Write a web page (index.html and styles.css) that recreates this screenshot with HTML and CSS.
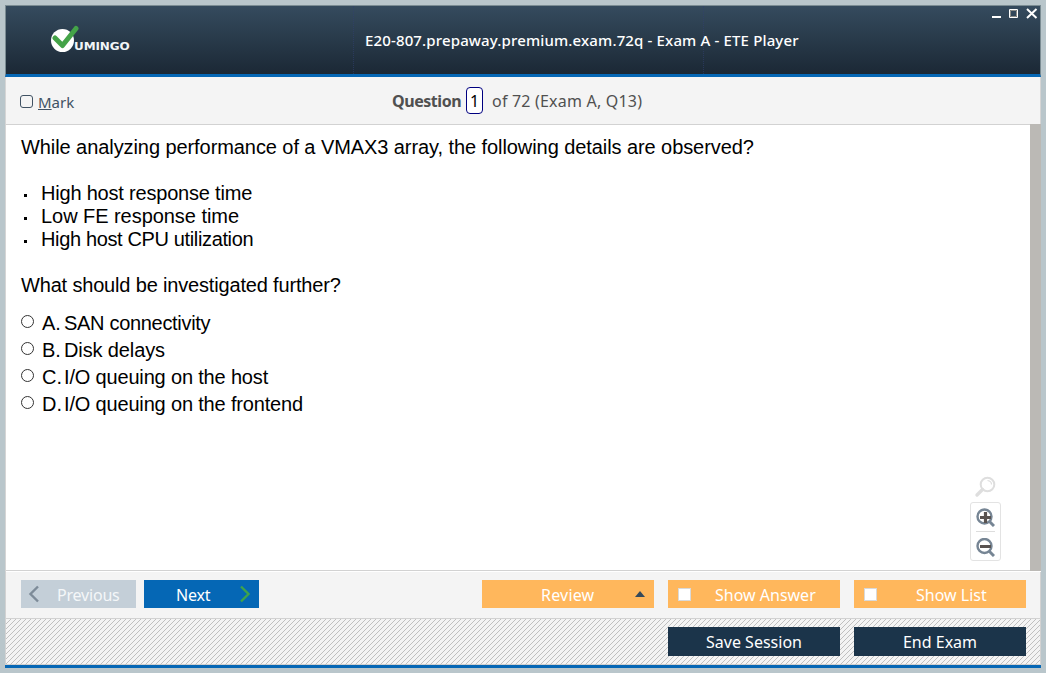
FILE: index.html
```html
<!DOCTYPE html>
<html lang="en">
<head>
<meta charset="utf-8">
<title>ETE Player</title>
<link rel="stylesheet" href="styles.css">
</head>
<body>
<main class="window">
  <header class="titlebar">
    <div class="brand">
      <svg class="logo-mark" width="29" height="28" viewBox="0 0 29 28"><circle cx="12.500" cy="15.500" r="11.500" fill="#fff"/><path d="M5 13L12.500 20.500L26 3.500" fill="none" stroke="#44a348" stroke-width="5" stroke-linecap="round" stroke-linejoin="round"/></svg>
      <span class="brand-name">UMINGO</span>
    </div>
    <h1 class="title">E20-807.prepaway.premium.exam.72q - Exam A - ETE Player</h1>
    <svg class="controls" width="46" height="11" viewBox="0 0 46 11"><path d="M0 8h9v2H0z" fill="#fff"/><path d="M17.500 1.500h8v8h-8z" fill="none" stroke="#fff"/><path d="M18.500 2.500h6v6h-6z" fill="none" stroke="#8d8d88"/><path d="M35 1L44.500 10M44.500 1L35 10" stroke="#fff" stroke-width="2"/></svg>
  </header>
  <section class="toolbar">
    <label class="mark"><span class="check"></span><span class="mark-text"><u>M</u>ark</span></label>
    <div class="counter"><b class="q-label">Question</b><span class="q-number">1</span><span class="q-total">of 72 (Exam A, Q13)</span></div>
  </section>
  <section class="body">
    <article class="question">
      <p class="line l-intro">While analyzing performance of a VMAX3 array, the following details are observed?</p>
      <ul class="details">
        <li class="line l-1">High host response time</li>
        <li class="line l-2">Low FE response time</li>
        <li class="line l-3">High host CPU utilization</li>
      </ul>
      <p class="line l-ask">What should be investigated further?</p>
      <div class="answers">
        <label class="answer"><i class="radio"></i><span class="letter">A.</span><span class="a-1">SAN connectivity</span></label>
        <label class="answer"><i class="radio"></i><span class="letter">B.</span><span class="a-2">Disk delays</span></label>
        <label class="answer"><i class="radio"></i><span class="letter">C.</span><span class="a-3">I/O queuing on the host</span></label>
        <label class="answer"><i class="radio"></i><span class="letter">D.</span><span class="a-3">I/O queuing on the frontend</span></label>
      </div>
    </article>
    <div class="zoom">
      <svg class="zoom-reset" width="22" height="22" viewBox="0 0 22 22" fill="none" stroke="#dedede"><circle cx="13.500" cy="8.500" r="6.800" stroke-width="2"/><path d="M8.500 13.500L3 19" stroke-width="3.400" stroke-linecap="round"/><path d="M13.500 4.500Q17.500 5 17.500 8.500" stroke-width="1.200"/></svg>
      <div class="zoom-box">
        <svg width="19" height="19" viewBox="0 0 19 19" fill="none"><circle cx="8.500" cy="8.500" r="7" stroke="#768594" stroke-width="2.400"/><path d="M13 13L18 18" stroke="#768594" stroke-width="3"/><path d="M4 9.500H15M9.500 4V15" stroke="#595350" stroke-width="3.200"/></svg>
        <hr class="zoom-rule">
        <svg width="19" height="19" viewBox="0 0 19 19" fill="none"><circle cx="8.500" cy="8" r="7" stroke="#768594" stroke-width="2.400"/><path d="M13 13L18 18" stroke="#768594" stroke-width="3"/><path d="M4 8.500H15" stroke="#595350" stroke-width="3"/></svg>
      </div>
    </div>
    <div class="scrollbar"></div>
  </section>
  <nav class="nav">
    <button class="btn prev"><svg width="12" height="18" viewBox="0 0 12 18"><path d="M10 1.500L2.500 9L10 16.500" fill="none" stroke="#7d8b98" stroke-width="2.400"/></svg><span class="t-prev">Previous</span></button>
    <button class="btn next"><span class="t-next">Next</span><svg width="12" height="18" viewBox="0 0 12 18"><path d="M2 1.500L9.500 9L2 16.500" fill="none" stroke="#3fa34b" stroke-width="2.400"/></svg></button>
    <span class="spacer"></span>
    <button class="btn amber review"><span class="t-review">Review</span><svg width="10" height="6" viewBox="0 0 10 6"><path d="M0 6L5 0L10 6Z" fill="#34495a"/></svg></button>
    <button class="btn amber toggle"><i class="box"></i><span class="t-answer">Show Answer</span></button>
    <button class="btn amber toggle"><i class="box"></i><span class="t-list">Show List</span></button>
  </nav>
  <footer class="bottom">
    <svg class="hatch" width="1034" height="46" shape-rendering="crispEdges"><defs><pattern id="h" width="5" height="5" patternUnits="userSpaceOnUse"><path d="M4 0h1v1h-1zM3 1h1v1h-1zM2 2h1v1h-1zM1 3h1v1h-1zM0 4h1v1h-1z" fill="#c0c0c0"/></pattern></defs><rect width="1034" height="46" fill="url(#h)"/></svg>
    <button class="btn dark"><span class="t-save">Save Session</span></button>
    <button class="btn dark"><span class="t-end">End Exam</span></button>
  </footer>
</main>
</body>
</html>
```
FILE: styles.css
```css
* { box-sizing: border-box; }
body { margin: 0; padding: 5px; height: 673px; overflow: hidden; background: #b9c6cb; font-family: "Noto Sans", sans-serif; }
.window { width: 1036px; height: 663px; display: flex; flex-direction: column; background: #f4f4f4; border-bottom: 3px solid #0567b5; }
.titlebar { position: relative; height: 72px; flex: none; border: 1px solid #7b8c93; border-bottom: 3px solid #0567b5; display: flex; background: linear-gradient(#354b5e, #1b2835); }
.titlebar::before { content: ""; position: absolute; left: 347px; top: 0; width: 349px; height: 68px; border: 1px dotted #303f7099; border-width: 0 1px; }
.brand { display: flex; padding: 19px 0 0 44px; width: 359px; }
.logo-mark { flex: none; }
.brand-name { font: bold 12px/14px "DejaVu Sans", sans-serif; color: #f2f5f7; margin: 13px 0 0 -5px; transform: scaleY(.82); letter-spacing: -.1px; }
.title { position: relative; margin: 24px 0 0; font-size: 15px; line-height: 21px; font-weight: 500; letter-spacing: .145px; color: #fff; white-space: nowrap; }
.controls { position: relative; margin: 2px 2px 0 auto; }
.toolbar { height: 47px; flex: none; display: flex; color: #505050; border: 1px solid #d5d5d5; border-width: 0 1px; }
.mark { display: flex; width: 386px; padding: 14px 0 0 14px; gap: 5px; color: #405263; font-size: 15px; line-height: 22px; }
.check { width: 13px; height: 13px; border: 1px solid #405263; border-radius: 3px; margin-top: 4px; }
.counter { display: flex; padding-top: 10px; font-size: 16px; line-height: 28px; white-space: nowrap; }
.q-label { width: 74px; letter-spacing: -.45px; }
.q-number { width: 17px; height: 27px; border: 1px solid #000080; border-radius: 4px; background: #fff; color: #000; text-align: center; line-height: 27px; }
.q-total { margin-left: 9px; letter-spacing: .2px; }
.body { position: relative; height: 448px; flex: none; display: flex; background: #fff; border-top: 1px solid #d2d2d2; border-left: 1px solid #d5d5d5; box-shadow: inset 0 -1px #fff, inset 0 -2px #d2d2d2; }
.question { width: 964px; padding: 11px 0 0 15px; font: 20px/23px "Liberation Sans", Arial, sans-serif; color: #000; }
.line { margin: 0; white-space: nowrap; }
.l-intro { letter-spacing: -.075px; }
.l-1 { letter-spacing: -.2px; }
.l-2 { letter-spacing: -.05px; }
.l-3 { letter-spacing: -.36px; }
.l-ask { letter-spacing: -.17px; }
.a-1 { letter-spacing: -.31px; }
.a-2 { letter-spacing: -.12px; }
.a-3 { letter-spacing: -.17px; }
.details { list-style: none; margin: 23px 0; padding: 0 0 0 20px; }
.details .line { display: flex; }
.details .line::before { content: ""; width: 3px; height: 3px; background: #000; margin: 12px 14px 0 -17px; }
.answers { margin-top: 13px; }
.answer { display: flex; height: 27px; line-height: 27px; white-space: nowrap; }
.radio { width: 13px; height: 13px; border: 1px solid #333; border-radius: 50%; margin: 5px 8px 0 0; }
.letter { width: 22px; }
.zoom { width: 31px; padding-top: 351px; display: flex; flex-direction: column; align-items: center; }
.zoom-reset { flex: none; margin-right: 2px; }
.zoom-box { margin-top: 4px; width: 31px; height: 59px; flex: none; border: 1px solid #e3e3e3; border-radius: 3px; display: flex; flex-direction: column; align-items: center; padding-top: 5px; }
.zoom-box svg { flex: none; }
.zoom-rule { width: 19px; border: 0; height: 1px; background: #ddd; margin: 4px 0 6px; flex: none; }
.scrollbar { width: 11px; margin: -1px 0 1px auto; background: #bbb9b5; }
.nav { height: 47px; flex: none; display: flex; padding: 8px 14px 0 15px; border: 1px solid #d2d2d2; border-top: 0; }
.btn { position: relative; border: 0; padding: 0; margin: 0; height: 28px; font: 16px/30px "Noto Sans", sans-serif; color: #fff; display: flex; align-items: center; white-space: nowrap; flex: none; }
.nav .btn span { padding-top: 2px; line-height: 28px; }
.prev { width: 115px; background: #c4cfd8; color: #f4f7f9; padding-left: 7px; gap: 17px; }
.t-prev { letter-spacing: -.2px; }
.next { width: 115px; background: #0567b5; margin-left: 8px; padding: 0 8px 0 32px; justify-content: space-between; }
.t-next { letter-spacing: -.2px; }
.spacer { flex: 1; }
.amber { width: 172px; background: #ffb75c; margin-left: 14px; }
.review { padding: 0 9px 0 59px; justify-content: space-between; }
.t-review { letter-spacing: .2px; }
.toggle { padding-left: 10px; }
.box { width: 13px; height: 13px; background: #fff; border: 1px solid #d9d9d9; }
.t-answer { margin-left: 24px; }
.t-list { margin-left: 39px; }
.bottom { position: relative; height: 46px; flex: none; display: flex; justify-content: flex-end; gap: 14px; padding: 8px 14px 0; border: 1px solid #d2d2d2; border-top: 0; }
.hatch { position: absolute; left: 0; top: 0; }
.dark { width: 172px; height: 29px; background: #1b344a; justify-content: center; }
```
